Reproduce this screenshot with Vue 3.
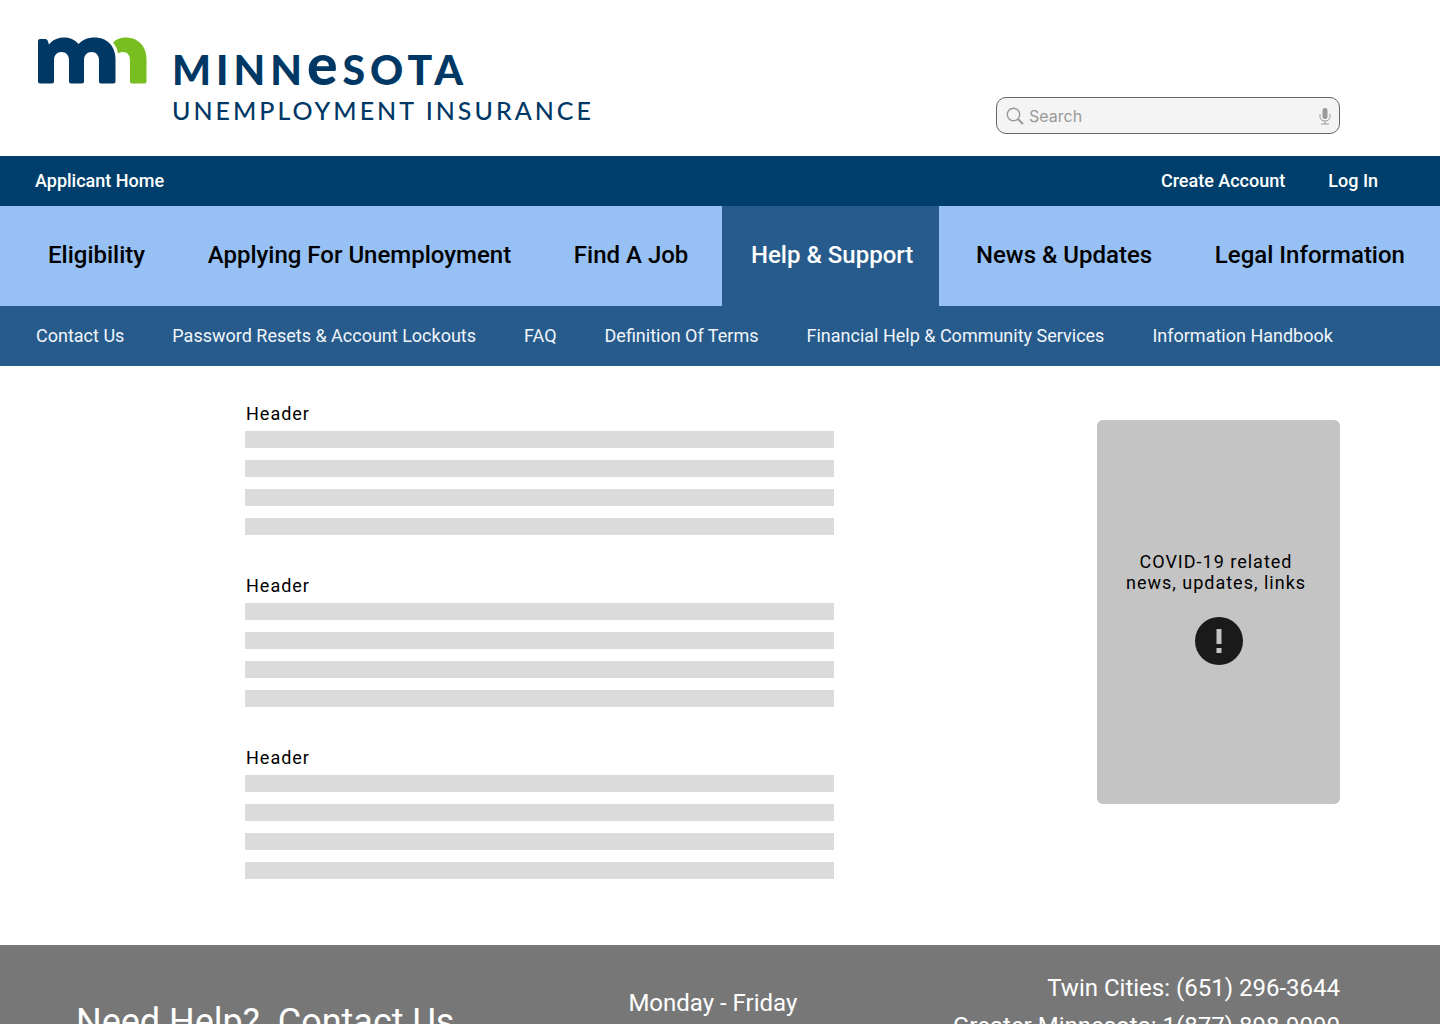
<script setup>
const mainNav = [
  { label: 'Eligibility' },
  { label: 'Applying For Unemployment' },
  { label: 'Find A Job' },
  { label: 'Help & Support', active: true },
  { label: 'News & Updates' },
  { label: 'Legal Information' },
]
const subNav = [
  'Contact Us',
  'Password Resets & Account Lockouts',
  'FAQ',
  'Definition Of Terms',
  'Financial Help & Community Services',
  'Information Handbook',
]
const sections = [1, 2, 3]
</script>

<template>
  <div class="page">
    <header class="masthead">
      <a class="brand" href="#">
        <svg class="brand-mark" width="110" height="48" viewBox="0 0 110 48" aria-hidden="true">
          <path fill="#003865" d="M0 4Q0 2 2 2H7.500Q9 2 9.600 3.500L11 7.500C15 2.500 20 .5 26 .5C32.500 .5 37 3 40.500 7C45 2.500 50 .5 56.500 .5C69 .5 77.500 9 77.500 22V44.500Q77.500 46.500 75.500 46.500H63Q61 46.500 61 44.500V23.500C61 18 58 15 53.500 15C49 15 46 18 46 23.500V44.500Q46 46.500 44 46.500H33Q31 46.500 31 44.500V23.500C31 18 28 15 23.500 15C19 15 16 18 16 23.500V44.500Q16 46.500 14 46.500H2Q0 46.500 0 44.500Z" />
          <path fill="#78be21" d="M75 5.500C78.500 2 82.500 .5 87.500 .5C100 .5 108.500 9 108.500 22V44.500Q108.500 46.500 106.500 46.500H94Q92 46.500 92 44.500V23.500C92 18 89.500 15 85 15C83 15 81.500 15.500 80 16.500C79.500 12.500 78 9 75 5.500Z" />
        </svg>
        <span class="brand-text">
          <span class="brand-name">MINN<span class="brand-e">e</span>SOTA</span>
          <span class="brand-sub">UNEMPLOYMENT INSURANCE</span>
        </span>
      </a>
      <form class="search" role="search" @submit.prevent>
        <svg width="18" height="18" viewBox="0 0 18 18" fill="none" stroke="#999" aria-hidden="true">
          <circle cx="7.500" cy="7.500" r="6.200" stroke-width="1.400" />
          <path d="M12 12L17 17" stroke-width="2" />
        </svg>
        <input type="search" placeholder="Search" aria-label="Search" />
        <button type="button" aria-label="Voice search">
          <svg width="12" height="18" viewBox="0 0 12 18" fill="none" stroke="#999" aria-hidden="true">
            <rect x="3.500" y="1" width="5" height="11" rx="2.500" fill="#999" stroke="none" />
            <path d="M1 7V9.500C1 12.500 3 14 6 14C9 14 11 12.500 11 9.500V7M6 14V17M2 17H10" />
          </svg>
        </button>
      </form>
    </header>

    <nav class="account-bar" aria-label="Account">
      <a href="#">Applicant Home</a>
      <div class="account-links">
        <a href="#">Create Account</a>
        <a href="#">Log In</a>
      </div>
    </nav>

    <nav class="main-nav" aria-label="Main">
      <a v-for="item in mainNav" :key="item.label" href="#" :class="{ active: item.active }">{{ item.label }}</a>
    </nav>

    <nav class="sub-nav" aria-label="Help and support">
      <a v-for="label in subNav" :key="label" href="#">{{ label }}</a>
    </nav>

    <main class="content">
      <div class="articles">
        <section v-for="n in sections" :key="n" class="article">
          <h2>Header</h2>
          <div v-for="line in 4" :key="line" class="line"></div>
        </section>
      </div>
      <aside class="notice">
        <p>COVID-19 related<br />news, updates, links</p>
        <svg width="48" height="48" viewBox="0 0 48 48" aria-hidden="true">
          <circle cx="24" cy="24" r="24" fill="#1a1a1a" />
          <path fill="#c4c4c4" d="M21.500 12H26.500V27H21.500ZM21.500 31H26.500V36H21.500Z" />
        </svg>
      </aside>
    </main>

    <footer class="footer">
      <a class="help" href="#">Need Help?&nbsp; Contact Us</a>
      <p class="hours">Monday - Friday</p>
      <p class="phones">Twin Cities: (651) 296-3644<br />Greater Minnesota: 1(877) 898-9090</p>
    </footer>
  </div>
</template>

<style>
body {
  margin: 0;
  background: #fff;
}
</style>

<style scoped>
.page {
  display: flex;
  flex-direction: column;
  height: 100vh;
  overflow: hidden auto;
  scrollbar-width: none;
  font-family: Roboto, "Liberation Sans", sans-serif;
  font-size: 18px;
  color: #000;
}
.page > * {
  flex-shrink: 0;
}
a {
  color: inherit;
  text-decoration: none;
  white-space: nowrap;
}
p,
h2 {
  margin: 0;
}
.masthead {
  display: flex;
  justify-content: space-between;
  align-items: flex-end;
  box-sizing: border-box;
  height: 156px;
  padding: 0 100px 22px 38px;
}
.brand {
  display: flex;
  align-self: flex-start;
  gap: 24px;
  padding-top: 37px;
  color: #003865;
  font-family: Lato, sans-serif;
}
.brand-text {
  display: flex;
  flex-direction: column;
  padding-top: 6px;
}
.brand-name {
  font-size: 41px;
  line-height: 48px;
  height: 51px;
  font-weight: 900;
  letter-spacing: 5px;
}
.brand-e {
  font-size: 57px;
  line-height: 40px;
}
.brand-sub {
  font-size: 25px;
  line-height: 32px;
  font-weight: 500;
  letter-spacing: 3px;
}
.search {
  display: flex;
  align-items: center;
  gap: 5px;
  box-sizing: border-box;
  width: 344px;
  height: 37px;
  padding: 0 8px 0 9px;
  border: 1px solid #666;
  border-radius: 10px;
  background: #f4f4f4;
}
.search input {
  flex: 1;
  min-width: 0;
  padding: 0;
  border: 0;
  outline: 0;
  background: none;
  font: 16px/22px Inter, sans-serif;
}
.search input::placeholder {
  color: #999;
}
.search button {
  display: flex;
  padding: 0;
  border: 0;
  background: none;
}
.account-bar {
  display: flex;
  justify-content: space-between;
  align-items: center;
  height: 48px;
  padding: 0 62px 2px 35px;
  background: #003f6b;
  color: #fff;
  font-weight: 500;
}
.account-links {
  display: flex;
  gap: 43px;
}
.main-nav {
  display: flex;
  justify-content: space-between;
  height: 100px;
  padding: 0 35px 0 48px;
  background: #97c1f4;
  font-size: 24px;
  line-height: 98px;
  font-weight: 500;
}
.main-nav .active {
  margin: 0 -26px 0 -29px;
  padding: 0 26px 0 29px;
  background: #275b8b;
  color: #fff;
}
.sub-nav {
  display: flex;
  align-items: center;
  gap: 48px;
  height: 58px;
  padding: 0 36px 2px;
  background: #275b8b;
  color: #f0f5fa;
}
.content {
  display: flex;
  justify-content: space-between;
  align-items: flex-start;
  padding: 37px 100px 66px 245px;
}
.articles {
  display: flex;
  flex-direction: column;
  gap: 40px;
  width: 589px;
}
.article {
  display: flex;
  flex-direction: column;
  gap: 12px;
}
.article h2 {
  margin-bottom: -5px;
  padding-left: 1px;
  font-size: 18px;
  line-height: 21px;
  font-weight: 400;
  letter-spacing: 1px;
}
.line {
  height: 17px;
  background: #dbdbdb;
}
.notice {
  display: flex;
  flex-direction: column;
  align-items: center;
  justify-content: center;
  gap: 24px;
  box-sizing: border-box;
  width: 243px;
  height: 384px;
  margin-top: 17px;
  padding-bottom: 9px;
  border-radius: 6px;
  background: #c4c4c4;
}
.notice p {
  padding-right: 5px;
  line-height: 21px;
  letter-spacing: 1px;
  text-align: center;
}
.footer {
  display: flex;
  align-items: flex-start;
  flex-grow: 1;
  padding: 24px 100px 24px 76px;
  background: #777;
  color: #fff;
  font-size: 24px;
  line-height: 38px;
}
.help {
  padding-top: 32px;
  font-size: 36px;
  line-height: 42px;
}
.hours {
  margin-left: 174px;
  padding-top: 15px;
}
.phones {
  margin-left: auto;
  text-align: right;
}
</style>
